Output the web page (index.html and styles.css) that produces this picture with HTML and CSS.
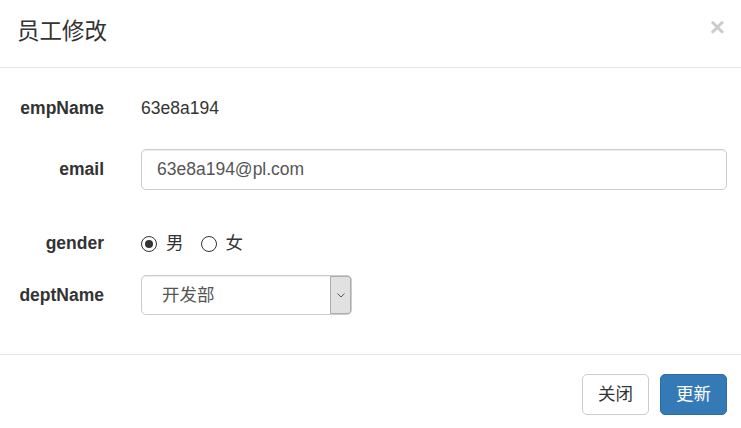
FILE: index.html
```html
<!DOCTYPE html>
<html lang="zh-CN">
<head>
<meta charset="utf-8">
<title>员工修改</title>
<link rel="stylesheet" href="styles.css">
</head>
<body>
<div class="modal">
  <div class="modal-header">
    <h4 class="modal-title">员工修改</h4>
    <button class="close" type="button">×</button>
  </div>
  <div class="modal-body">
    <div class="form-row row-static">
      <label class="label">empName</label>
      <p class="static">63e8a194</p>
    </div>
    <div class="form-row row-email">
      <label class="label">email</label>
      <div class="input">63e8a194@pl.com</div>
    </div>
    <div class="form-row row-gender">
      <label class="label">gender</label>
      <div class="radios">
        <span class="radio checked"></span><span class="radio-text">男</span>
        <span class="radio"></span><span class="radio-text">女</span>
      </div>
    </div>
    <div class="form-row row-dept">
      <label class="label">deptName</label>
      <div class="select">
        <span class="select-text">开发部</span>
        <span class="select-arrow">
          <svg width="8" height="5" viewBox="0 0 8 5"><path d="M0.5 0.5 L4 4 L7.5 0.5" fill="none" stroke="#555" stroke-width="1"/></svg>
        </span>
      </div>
    </div>
  </div>
  <div class="modal-footer">
    <button class="btn btn-default" type="button">关闭</button>
    <button class="btn btn-primary" type="button">更新</button>
  </div>
</div>
</body>
</html>
```

FILE: styles.css
```css
html, body {
  margin: 0;
  padding: 0;
  background: #fff;
}
body {
  font-family: "Liberation Sans", Arial, "Noto Sans CJK SC", sans-serif;
  font-size: 17.5px;
  line-height: 25px;
  color: #333;
}
.modal {
  width: 741px;
}
.modal-header {
  display: flex;
  justify-content: space-between;
  align-items: flex-start;
  height: 68px;
  box-sizing: border-box;
  padding: 17px 16px 0 17px;
  border-bottom: 1px solid #e5e5e5;
}
.modal-title {
  margin: 0;
  font-size: 22.5px;
  line-height: 30px;
  font-weight: normal;
  color: #333;
}
.close {
  margin: 0;
  padding: 0;
  border: 0;
  background: transparent;
  font-family: "Liberation Sans", Arial, sans-serif;
  font-size: 26px;
  font-weight: bold;
  line-height: 20px;
  color: #000;
  opacity: 0.2;
}
.modal-body {
  height: 286px;
  box-sizing: border-box;
  padding: 19px 14px 0 0;
}
.form-row {
  display: grid;
  grid-template-columns: 104px 1fr;
  column-gap: 37px;
  align-items: center;
}
.label {
  text-align: right;
  font-weight: bold;
  color: #333;
}
.row-static {
  height: 43px;
  margin-bottom: 19px;
}
.static {
  margin: 0;
}
.row-email {
  height: 41px;
  margin-bottom: 41px;
}
.input {
  height: 41px;
  box-sizing: border-box;
  border: 1px solid #ccc;
  border-radius: 5px;
  padding: 0 15px;
  line-height: 39px;
  color: #555;
  box-shadow: inset 0 1px 1px rgba(0, 0, 0, 0.075);
}
.row-gender {
  height: 25px;
  margin-bottom: 19px;
}
.radios {
  display: flex;
  align-items: center;
}
.radio {
  width: 16px;
  height: 16px;
  box-sizing: border-box;
  border: 1px solid #333;
  border-radius: 50%;
  display: flex;
  align-items: center;
  justify-content: center;
  background: #fff;
}
.radio.checked::after {
  content: "";
  width: 8px;
  height: 8px;
  border-radius: 50%;
  background: #333;
}
.radio-text {
  margin-left: 9px;
  margin-right: 17px;
}
.row-dept {
  height: 40px;
}
.select {
  width: 211px;
  height: 40px;
  box-sizing: border-box;
  border: 1px solid #ccc;
  border-radius: 5px;
  display: flex;
  align-items: stretch;
  justify-content: space-between;
  color: #555;
  box-shadow: inset 0 1px 1px rgba(0, 0, 0, 0.075);
}
.select-text {
  padding-left: 20px;
  line-height: 38px;
}
.select-arrow {
  width: 21px;
  box-sizing: border-box;
  background: #e1e1e1;
  border: 1px solid #adadad;
  border-radius: 0 3px 3px 0;
  display: flex;
  align-items: center;
  justify-content: center;
}
.modal-footer {
  display: flex;
  justify-content: flex-end;
  gap: 11px;
  padding: 19px 14px 19px 0;
  border-top: 1px solid #e5e5e5;
}
.btn {
  height: 41px;
  width: 67px;
  box-sizing: border-box;
  border: 1px solid #ccc;
  border-radius: 5px;
  font-family: "Liberation Sans", Arial, "Noto Sans CJK SC", sans-serif;
  font-size: 17.5px;
  line-height: 25px;
  padding: 0;
  background: #fff;
  color: #333;
}
.btn-primary {
  background: #337ab7;
  border-color: #2e6da4;
  color: #fff;
}
```
